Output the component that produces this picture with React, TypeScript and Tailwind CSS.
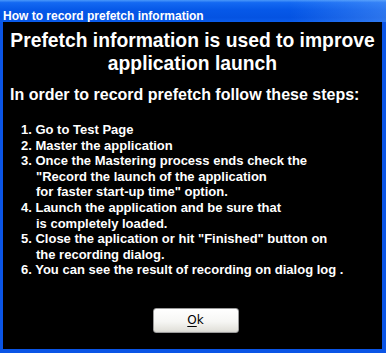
import React from 'react';

const steps: { num: string; lines: string[] }[] = [
  { num: '1.', lines: ['Go to Test Page'] },
  { num: '2.', lines: ['Master the application'] },
  {
    num: '3.',
    lines: [
      'Once the Mastering process ends check the',
      '"Record the launch of the application',
      'for faster start-up time" option.',
    ],
  },
  { num: '4.', lines: ['Launch the application and be sure that', 'is completely loaded.'] },
  { num: '5.', lines: ['Close the aplication or hit "Finished" button on', 'the recording dialog.'] },
  { num: '6.', lines: ['You can see the result of recording on dialog log .'] },
];

const App: React.FC = () => {
  return (
    <div className="w-[386px] h-[353px] flex flex-col bg-[#0b55e6] font-['Liberation_Sans',Arial,sans-serif] overflow-hidden">
      {/* Title bar */}
      <div className="h-[22px] shrink-0 pl-[3px] pt-[3px] bg-[linear-gradient(to_right,rgba(255,255,255,0)_75%,rgba(120,180,255,0.35)),linear-gradient(to_bottom,#4a98fa_0%,#1469f2_12%,#0658e8_45%,#0453e2_80%,#0a5cec_100%)]">
        <span className="text-white text-[12px] font-bold leading-[19px] whitespace-nowrap">
          How to record prefetch information
        </span>
      </div>

      {/* Body */}
      <div className="flex-1 flex flex-col bg-black border-l-[3px] border-r-[4px] border-b-[4px] border-[#0b55e6] text-white">
        <div className="pt-[6.6px] text-center text-[19.3px] font-bold leading-[23px]">
          <div>Prefetch information is used to improve</div>
          <div>application launch</div>
        </div>

        <div className="mt-[10.6px] pl-[7px] text-[16px] font-bold leading-[20px] whitespace-nowrap">
          In order to record prefetch follow these steps:
        </div>

        <div className="mt-[16.8px] pl-[18px] text-[13px] font-bold leading-[15.6px] whitespace-nowrap">
          {steps.map(step => (
            <div key={step.num}>
              {step.lines.map((line, i) => (
                <div key={i} className={i === 0 ? '' : 'pl-[15px]'}>
                  {i === 0 ? `${step.num} ${line}` : line}
                </div>
              ))}
            </div>
          ))}
        </div>

        <div className="mt-[30px] flex justify-center">
          <button className="w-[86px] h-[25px] ml-[6px] rounded-[3px] border border-[#9a9a9a] bg-[linear-gradient(to_bottom,#ffffff_0%,#f6f6f4_55%,#e4e3dd_90%,#d6d5cf_100%)] text-black text-[12px] font-['DejaVu_Sans',sans-serif] leading-none">
            <span className="underline underline-offset-2">O</span>k
          </button>
        </div>
      </div>
    </div>
  );
};

export default App;
